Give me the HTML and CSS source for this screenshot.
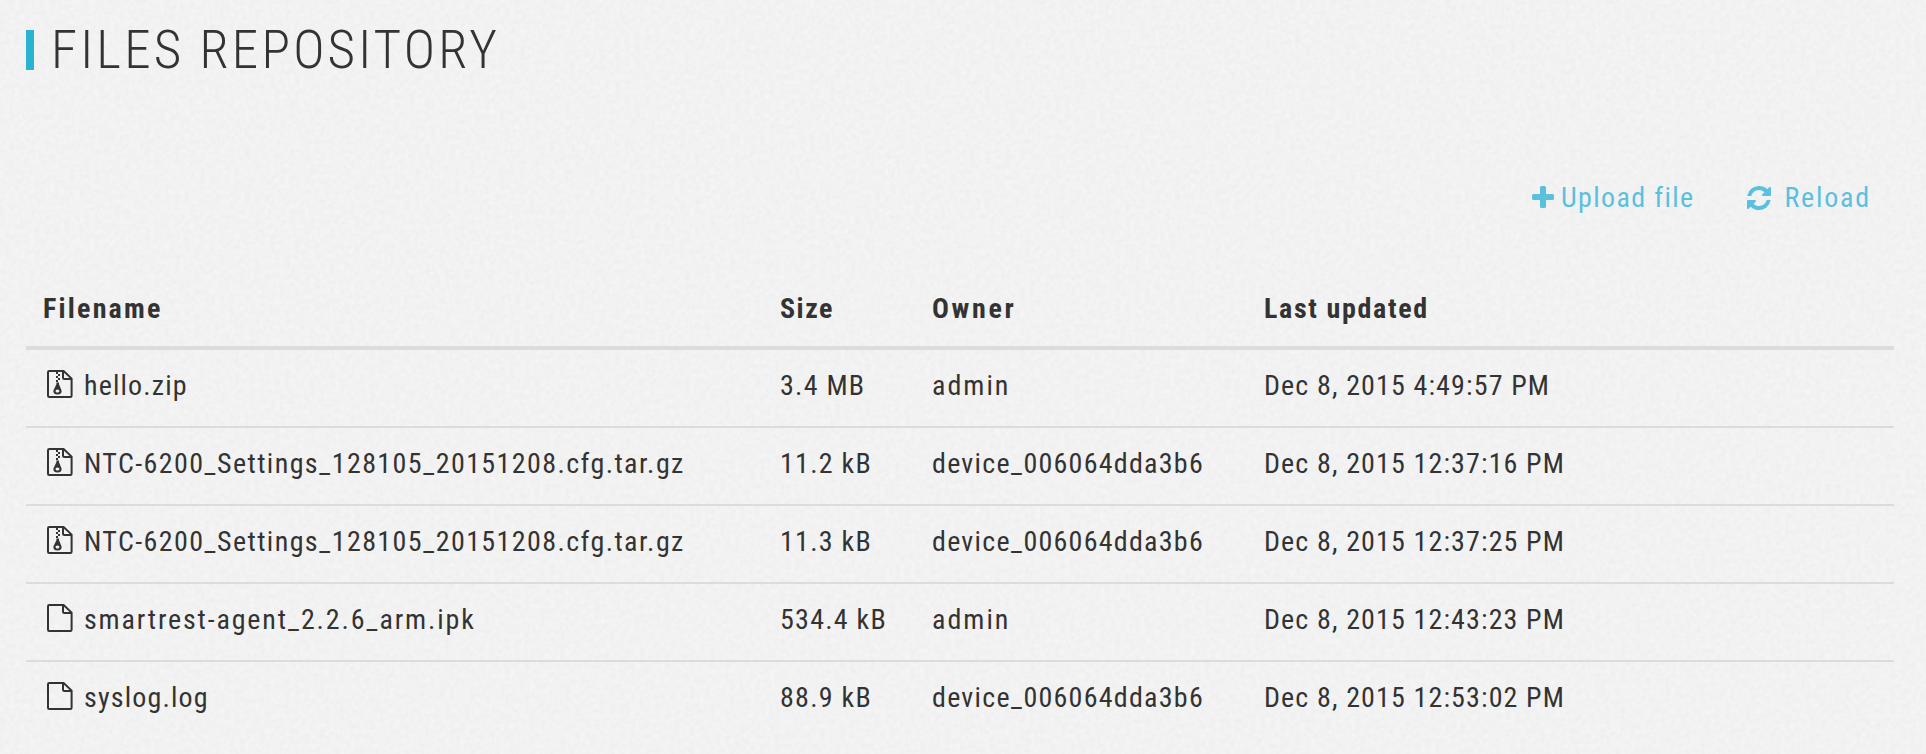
FILE: index.html
```html
<!DOCTYPE html>
<html lang="en">
<head>
<meta charset="utf-8">
<title>Files repository</title>
<link rel="stylesheet" href="styles.css">
</head>
<body>
<svg class="paper" aria-hidden="true">
  <filter id="grain" x="0" y="0" width="100%" height="100%" color-interpolation-filters="sRGB">
    <feTurbulence type="fractalNoise" baseFrequency="0.2" numOctaves="2" seed="4" stitchTiles="stitch"/>
    <feColorMatrix values="0.04 0 0 0 0.928  0.04 0 0 0 0.928  0.04 0 0 0 0.928  0 0 0 0 1"/>
  </filter>
  <rect width="100%" height="100%" filter="url(#grain)"/>
</svg>
<svg class="defs" aria-hidden="true">
  <symbol id="file" viewBox="0 0 26 28">
    <path d="M2.2 1H16.6L24.6 8.6V25.8Q24.6 27 23.4 27H2.2Q1 27 1 25.8V2.2Q1 1 2.2 1Z M16 1V7.8Q16 9 17.2 9H24.6" fill="none" stroke="currentColor" stroke-width="2"/>
  </symbol>
  <symbol id="zip" viewBox="0 0 26 28">
    <use href="#file"/>
    <path d="M9 2h2v2h-2zM11 4h2v2h-2zM9 6h2v2h-2zM11 8h2v2h-2zM9 10h2v2h-2z" fill="currentColor"/>
    <path fill-rule="evenodd" d="M9.4 12.5H12V14.2L14.6 20.6Q15 24.6 10.5 24.6T6.4 20.6L9.4 14.2ZM10.5 19.5C7.9 19.5 7.9 22.6 10.5 22.6S13.1 19.5 10.5 19.5Z" fill="currentColor"/>
  </symbol>
</svg>
<main class="page">
  <h1 class="title">FILES REPOSITORY</h1>
  <nav class="toolbar">
    <a class="action upload"><svg class="plus" viewBox="0 0 22 22"><path d="M9.5 0h3Q14 0 14 1.5V8h6.5Q22 8 22 9.5v3Q22 14 20.5 14H14v6.500Q14 22 12.500 22h-3Q8 22 8 20.500V14H1.500Q0 14 0 12.500v-3Q0 8 1.500 8H8V1.500Q8 0 9.500 0Z" fill="currentColor"/></svg><span>Upload file</span></a>
    <a class="action reload"><svg class="sync" viewBox="0 0 1536 1536"><path fill="currentColor" d="M1511 928q0 5-1 7-64 268-268 434.500T764 1536q-146 0-282.500-55T238 1324l-129 129q-19 19-45 19t-45-19-19-45V960q0-26 19-45t45-19h448q26 0 45 19t19 45-19 45l-137 137q71 66 161 102t187 36q134 0 250-65t186-179q11-17 53-117 8-23 30-23h192q13 0 22.500 9.500t9.500 22.500zm25-800v448q0 26-19 45t-45 19h-448q-26 0-45-19t-19-45 19-45l138-138Q969 256 768 256q-134 0-250 65T332 500q-11 17-53 117-8 23-30 23H50q-13 0-22.500-9.500T18 608v-7q65-268 270-434.500T768 0q146 0 284 55.500T1297 212l130-129q19-19 45-19t45 19 19 45z"/></svg><span>Reload</span></a>
  </nav>
  <table class="files">
    <colgroup><col class="c-name"><col class="c-size"><col class="c-owner"><col></colgroup>
    <thead><tr><th class="filename">Filename</th><th class="size">Size</th><th class="owner">Owner</th><th class="updated">Last updated</th></tr></thead>
    <tbody>
      <tr><td class="name short"><svg class="icon"><use href="#zip"/></svg>hello.zip</td><td>3.4 MB</td><td class="user">admin</td><td class="date">Dec 8, 2015 4:49:57 PM</td></tr>
      <tr><td class="name long"><svg class="icon"><use href="#zip"/></svg>NTC-6200_Settings_128105_20151208.cfg.tar.gz</td><td>11.2 kB</td><td>device_006064dda3b6</td><td class="date">Dec 8, 2015 12:37:16 PM</td></tr>
      <tr><td class="name long"><svg class="icon"><use href="#zip"/></svg>NTC-6200_Settings_128105_20151208.cfg.tar.gz</td><td>11.3 kB</td><td>device_006064dda3b6</td><td class="date">Dec 8, 2015 12:37:25 PM</td></tr>
      <tr><td class="name"><svg class="icon"><use href="#file"/></svg>smartrest-agent_2.2.6_arm.ipk</td><td>534.4 kB</td><td class="user">admin</td><td class="date">Dec 8, 2015 12:43:23 PM</td></tr>
      <tr><td class="name short"><svg class="icon"><use href="#file"/></svg>syslog.log</td><td>88.9 kB</td><td>device_006064dda3b6</td><td class="date">Dec 8, 2015 12:53:02 PM</td></tr>
    </tbody>
  </table>
</main>
</body>
</html>
```

FILE: styles.css
```css
* { box-sizing: border-box; }
body {
  margin: 0;
  background: #f2f2f2;
  color: #333;
  font: 400 28px/40px Roboto, sans-serif;
  font-stretch: 75%;
  letter-spacing: 1.25px;
  overflow: hidden;
}
.paper { position: absolute; inset: 0; width: 100%; height: 100%; z-index: -1; }
.defs { position: absolute; width: 0; height: 0; }
.page { padding: 30px 32px 0 26px; }
.title {
  margin: 0;
  height: 40px;
  padding-left: 17px;
  border-left: 8px solid #28b4d0;
  font-size: 53px;
  font-weight: 300;
  line-height: 40px;
  letter-spacing: 3.2px;
}
.toolbar {
  display: flex;
  justify-content: flex-end;
  gap: 53px;
  margin-top: 108px;
  padding-right: 23px;
  color: #5bc0de;
}
.action { display: flex; align-items: center; height: 40px; }
.upload { gap: 7px; letter-spacing: 1.35px; }
.reload { gap: 13px; letter-spacing: 1.8px; }
.plus { width: 22px; height: 22px; margin-bottom: 2px; }
.sync { width: 24px; height: 24px; }
.files {
  width: 100%;
  margin-top: 52px;
  table-layout: fixed;
  border-collapse: separate;
  border-spacing: 0;
}
.c-name { width: 737px; }
.c-size { width: 152px; }
.c-owner { width: 332px; }
th, td { padding: 0 0 0 17px; text-align: left; white-space: nowrap; }
th {
  height: 80px;
  padding-top: 2px;
  border-bottom: 4px solid #dcdcdc;
  font-weight: 700;
}
.filename { letter-spacing: 2.2px; }
.size { letter-spacing: 1.5px; }
.owner { letter-spacing: 2.7px; }
.updated { letter-spacing: 1.65px; }
td { height: 78px; padding-bottom: 5px; border-bottom: 2px solid #dcdcdc; }
tbody tr:last-child td { border-bottom-color: transparent; }
.name { padding-left: 21px; letter-spacing: 1.83px; }
.long { letter-spacing: 1.39px; }
.short { letter-spacing: 1.15px; }
.user { letter-spacing: 2px; }
.date { letter-spacing: 1.13px; }
.icon { width: 26px; height: 28px; margin-right: 11px; vertical-align: -3px; }
```
